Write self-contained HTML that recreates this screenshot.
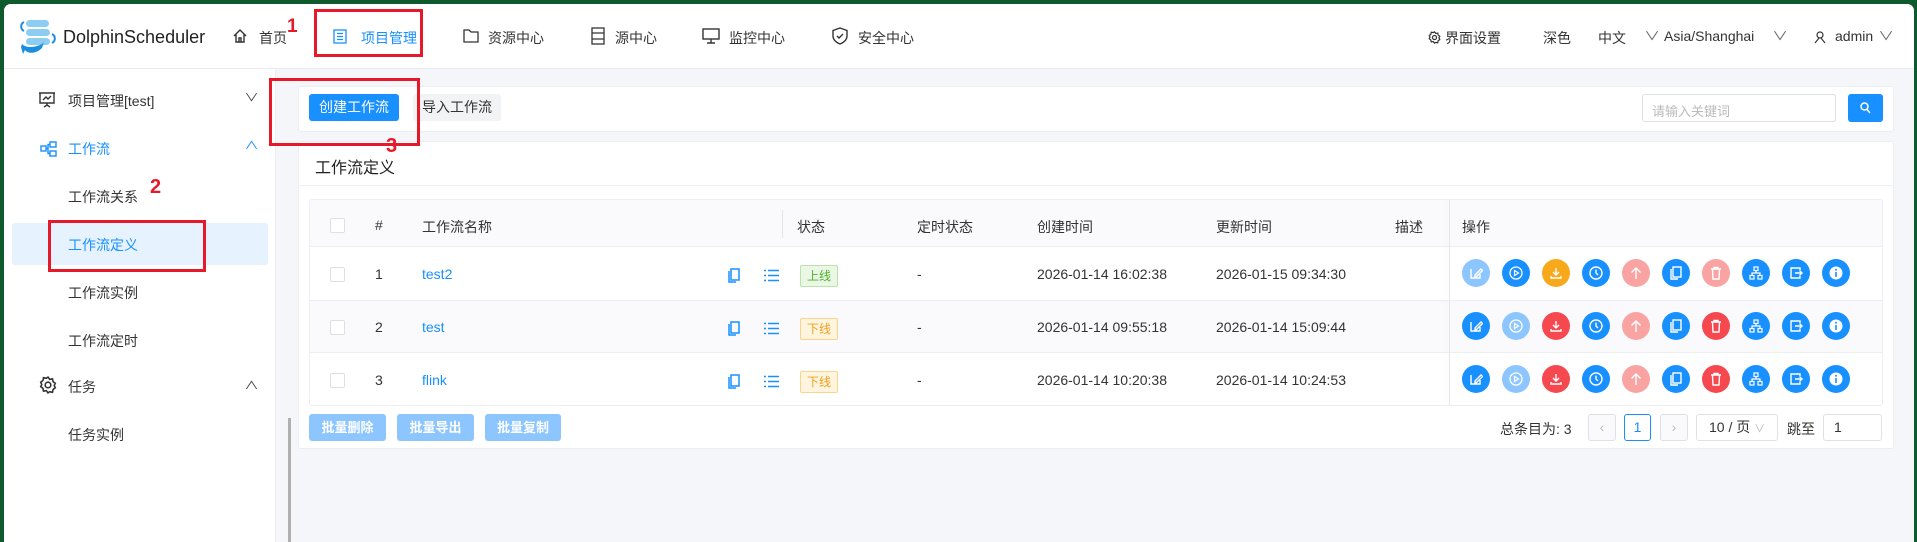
<!DOCTYPE html>
<html><head><meta charset="utf-8">
<style>
*{box-sizing:border-box;margin:0;padding:0}
body{width:1917px;height:542px;overflow:hidden;background:#0f5a2c;font-family:"Liberation Sans","Noto Sans CJK SC",sans-serif;font-size:14px;color:#333}
.frame{position:absolute;left:4px;top:4px;right:3px;bottom:0;background:#f5f6fa;border-radius:7px 7px 0 0;overflow:hidden}
.a{position:absolute;white-space:nowrap}
.hdr{position:absolute;left:0;top:0;right:0;height:65px;background:#fff;border-bottom:1px solid #e8e9ee}
.side{position:absolute;left:0;top:65px;width:272px;bottom:0;background:#fff;border-right:1px solid #eee}
.blue{color:#1890ff}
.red{border:3px solid #e6192a;position:absolute;z-index:5}
.card{position:absolute;background:#fff;border:1px solid #eceef2;border-radius:3px}
.cb{position:absolute;width:15px;height:15px;border:1px solid #dcdfe6;border-radius:2px;background:#fff}
.c{position:absolute;width:28px;height:28px;border-radius:50%}
.c svg{position:absolute;left:7px;top:7px}
.tag{position:absolute;width:38px;height:22px;font-size:12px;text-align:center;line-height:20px;border-radius:2px;white-space:nowrap}
.bb{position:absolute;height:27px;background:#8dc5ff;color:#fff;font-size:13px;text-align:center;line-height:27px;border-radius:3px;font-weight:bold}
.pg{position:absolute;top:410px;height:27px;border:1px solid #e0e0e6;border-radius:3px;background:#fff;text-align:center;line-height:25px}
</style></head><body>
<div class="frame">
<div class="hdr">
 <svg class="a" style="left:12px;top:14px" width="46" height="40" viewBox="0 0 46 40">
  <rect x="10" y="2" width="23" height="7" rx="3.5" fill="#8ecdf2"/><rect x="10" y="11" width="24" height="7" rx="3.5" fill="#8ecdf2"/><rect x="10" y="20" width="24" height="7" rx="3.5" fill="#8ecdf2"/>
  <path d="M8 4 A5 5 0 0 0 8 13" stroke="#1c8ee0" stroke-width="2" fill="none"/><path d="M36 16 A5 5 0 0 1 36 25" stroke="#1c8ee0" stroke-width="2" fill="none"/>
  <path d="M6 26 C10 30 18 30 26 26 L28 24 L26 30 C20 36 12 36 9 32 L7 36 L5 29 Z" fill="#1c8ee0"/>
 </svg>
 <div class="a" style="left:59px;top:23px;font-size:18px;color:#222">DolphinScheduler</div>
 <svg class="a" style="left:228px;top:24px" width="16" height="16" viewBox="0 0 16 16" fill="none" stroke="#333" stroke-width="1.4"><path d="M2 8 L8 2 L14 8 M4 6 V14 H12 V6 M7 14 V10 H9 V14"/></svg>
 <div class="a" style="left:255px;top:24px">首页</div>
 <div class="a" style="left:283px;top:12px;color:#e6192a;font-weight:bold;font-size:19px">1</div>
 <svg class="a" style="left:329px;top:25px" width="14" height="15" viewBox="0 0 14 15" fill="none" stroke="#1890ff" stroke-width="1.3"><rect x="1" y="1" width="12" height="13"/><path d="M4 4.5h6M4 7.5h6M4 10.5h6"/></svg>
 <div class="a blue" style="left:357px;top:24px">项目管理</div>
 <div class="red" style="left:310px;top:5px;width:109px;height:48px"></div>
 <svg class="a" style="left:459px;top:25px" width="16" height="14" viewBox="0 0 16 14" fill="none" stroke="#333" stroke-width="1.3"><path d="M1 1h5l2 2h7v10H1z"/></svg>
 <div class="a" style="left:484px;top:24px">资源中心</div>
 <svg class="a" style="left:587px;top:23px" width="14" height="18" viewBox="0 0 14 18" fill="none" stroke="#333" stroke-width="1.3"><rect x="1" y="1" width="12" height="16"/><path d="M1 6h12M1 12h12"/></svg>
 <div class="a" style="left:611px;top:24px">源中心</div>
 <svg class="a" style="left:698px;top:24px" width="18" height="16" viewBox="0 0 18 16" fill="none" stroke="#333" stroke-width="1.4"><rect x="1" y="1" width="16" height="10"/><path d="M9 11v4M5 15h8"/></svg>
 <div class="a" style="left:725px;top:24px">监控中心</div>
 <svg class="a" style="left:828px;top:23px" width="16" height="18" viewBox="0 0 16 18" fill="none" stroke="#333" stroke-width="1.4"><path d="M8 1 L15 3.5 V9 C15 13 11 16 8 17 C5 16 1 13 1 9 V3.5 Z M5 9l2 2 4-4"/></svg>
 <div class="a" style="left:854px;top:24px">安全中心</div>
 <svg class="a" style="left:1424px;top:27px" width="13" height="13" viewBox="0 0 16 16" fill="none" stroke="#333" stroke-width="1.5"><circle cx="8" cy="8" r="2.5"/><path d="M8 1l1.5 2 2.5-.5.5 2.5 2 1.5-1 2 1 2-2 1.5-.5 2.5-2.5-.5L8 15l-1.5-2-2.5.5-.5-2.5-2-1.5 1-2-1-2 2-1.5.5-2.5 2.5.5z"/></svg>
 <div class="a" style="left:1441px;top:24px">界面设置</div>
 <div class="a" style="left:1539px;top:24px">深色</div>
 <div class="a" style="left:1594px;top:24px">中文</div>
 <div class="a" style="left:1642px;top:23px;color:#666;font-size:12px;transform:scaleX(1.3)">∨</div>
 <div class="a" style="left:1660px;top:24px">Asia/Shanghai</div>
 <div class="a" style="left:1770px;top:23px;color:#666;font-size:12px;transform:scaleX(1.3)">∨</div>
 <svg class="a" style="left:1810px;top:27px" width="12" height="13" viewBox="0 0 12 13" fill="none" stroke="#333" stroke-width="1.2"><circle cx="6" cy="4" r="3"/><path d="M1 12 L5 7 M11 12 L7 7"/></svg>
 <div class="a" style="left:1831px;top:24px">admin</div>
 <div class="a" style="left:1876px;top:23px;color:#666;font-size:12px;transform:scaleX(1.3)">∨</div>
</div>

<div class="side">
 <svg class="a" style="left:34px;top:22px" width="18" height="18" viewBox="0 0 18 18" fill="none" stroke="#333" stroke-width="1.4"><path d="M1 2h16M2 2v10h14V2M5 9l3-3 2 2 3-3M9 12v3M6 16l3-2 3 2"/></svg>
 <div class="a" style="left:64px;top:22px">项目管理[test]</div>
 <div class="a" style="left:242px;top:20px;color:#444;font-size:11px;transform:scaleX(1.3)">∨</div>
 <svg class="a" style="left:36px;top:72px" width="17" height="16" viewBox="0 0 17 16" fill="none" stroke="#1890ff" stroke-width="1.4"><rect x="1" y="5" width="5" height="5"/><rect x="10" y="1" width="6" height="5"/><rect x="10" y="10" width="6" height="5"/><path d="M6 7.5h2V3.5h2M8 7.5v5h2"/></svg>
 <div class="a blue" style="left:64px;top:70px">工作流</div>
 <div class="a blue" style="left:242px;top:68px;font-size:11px;transform:scaleX(1.3) scaleY(-1)">∨</div>
 <div class="a" style="left:64px;top:118px">工作流关系</div>
 <div class="a" style="left:146px;top:107px;color:#e6192a;font-weight:bold;font-size:20px">2</div>
 <div class="a" style="left:8px;top:154px;width:256px;height:42px;background:#e6f3ff;border-radius:3px"></div>
 <div class="a blue" style="left:64px;top:166px">工作流定义</div>
 <div class="red" style="left:44px;top:151px;width:158px;height:52px"></div>
 <div class="a" style="left:64px;top:214px">工作流实例</div>
 <div class="a" style="left:64px;top:262px">工作流定时</div>
 <svg class="a" style="left:35px;top:307px" width="18" height="18" viewBox="0 0 16 16" fill="none" stroke="#333" stroke-width="1.4"><circle cx="8" cy="8" r="2.5"/><path d="M8 1l1.5 2 2.5-.5.5 2.5 2 1.5-1 2 1 2-2 1.5-.5 2.5-2.5-.5L8 15l-1.5-2-2.5.5-.5-2.5-2-1.5 1-2-1-2 2-1.5.5-2.5 2.5.5z"/></svg>
 <div class="a" style="left:64px;top:308px">任务</div>
 <div class="a" style="left:242px;top:308px;color:#444;font-size:11px;transform:scaleX(1.3) scaleY(-1)">∨</div>
 <div class="a" style="left:64px;top:356px">任务实例</div>
</div>
<div class="a" style="left:284px;top:414px;width:3px;height:130px;background:#b0b0b0"></div>

<div class="card" style="left:294px;top:82px;width:1596px;height:46px"></div>
<div class="a" style="left:305px;top:90px;width:90px;height:27px;background:#1890ff;border-radius:3px;color:#fff;text-align:center;line-height:27px;font-size:14px">创建工作流</div>
<div class="a" style="left:409px;top:90px;width:88px;height:27px;background:#f2f3f5;border-radius:3px;text-align:center;line-height:27px">导入工作流</div>
<div class="a" style="left:1638px;top:90px;width:194px;height:28px;border:1px solid #dcdfe6;border-radius:3px;background:#fff;color:#bbb;font-size:13px;padding:6px 9px">请输入关键词</div>
<div class="a" style="left:1844px;top:90px;width:35px;height:28px;background:#1890ff;border-radius:3px"><svg style="position:absolute;left:12px;top:8px" width="11" height="12" viewBox="0 0 11 12" fill="none" stroke="#fff" stroke-width="1.5"><circle cx="4.5" cy="4.5" r="3.5"/><path d="M7 7.5l3 3.5"/></svg></div>

<div class="card" style="left:294px;top:137px;width:1596px;height:308px"></div>
<div class="a" style="left:311px;top:150px;font-size:16px;color:#222">工作流定义</div>
<div class="a" style="left:295px;top:181px;width:1594px;height:1px;background:#eceef2"></div>
<div class="red" style="left:265px;top:74px;width:151px;height:68px"></div>
<div class="a" style="left:382px;top:131px;color:#e6192a;font-weight:bold;font-size:20px;z-index:6">3</div>

<div class="a" style="left:305px;top:195px;width:1574px;height:207px;border:1px solid #eceef2;border-radius:3px;background:#fff;overflow:hidden">
 <div class="a" style="left:0;top:0;width:100%;height:47px;background:#fafafc;border-bottom:1px solid #eceef2"></div>
 <div class="a" style="left:0;top:100px;width:100%;height:53px;background:#fafafc;border-top:1px solid #eceef2;border-bottom:1px solid #eceef2"></div>
 <div class="a" style="left:472px;top:10px;width:1px;height:28px;background:#e6e6ea"></div>
 <div class="a" style="left:1139px;top:0;width:1px;height:207px;background:#e6e6ea;box-shadow:-3px 0 6px rgba(0,0,0,.06)"></div>
</div>
<div class="cb" style="left:326px;top:214px"></div>
<div class="a" style="left:371px;top:213px">#</div>
<div class="a" style="left:418px;top:213px">工作流名称</div>
<div class="a" style="left:793px;top:213px">状态</div>
<div class="a" style="left:913px;top:213px">定时状态</div>
<div class="a" style="left:1033px;top:213px">创建时间</div>
<div class="a" style="left:1212px;top:213px">更新时间</div>
<div class="a" style="left:1391px;top:213px">描述</div>
<div class="a" style="left:1458px;top:213px">操作</div>

<div class="cb" style="left:326px;top:263px"></div><div class="a" style="left:371px;top:262px">1</div><div class="a blue" style="left:418px;top:262px">test2</div>
<div class="cb" style="left:326px;top:316px"></div><div class="a" style="left:371px;top:315px">2</div><div class="a blue" style="left:418px;top:315px">test</div>
<div class="cb" style="left:326px;top:369px"></div><div class="a" style="left:371px;top:368px">3</div><div class="a blue" style="left:418px;top:368px">flink</div>

<svg class="a" style="left:724px;top:264px" width="12" height="15" viewBox="0 0 12 15" fill="none" stroke="#1890ff" stroke-width="1.5"><rect x="3" y="1" width="8" height="11"/><path d="M1 3v11h7"/></svg>
<svg class="a" style="left:724px;top:317px" width="12" height="15" viewBox="0 0 12 15" fill="none" stroke="#1890ff" stroke-width="1.5"><rect x="3" y="1" width="8" height="11"/><path d="M1 3v11h7"/></svg>
<svg class="a" style="left:724px;top:370px" width="12" height="15" viewBox="0 0 12 15" fill="none" stroke="#1890ff" stroke-width="1.5"><rect x="3" y="1" width="8" height="11"/><path d="M1 3v11h7"/></svg>
<svg class="a" style="left:760px;top:265px" width="15" height="13" viewBox="0 0 15 13" stroke="#1890ff" stroke-width="1.5"><path d="M0 1.5h2M4 1.5h11M0 6.5h2M4 6.5h11M0 11.5h2M4 11.5h11"/></svg>
<svg class="a" style="left:760px;top:318px" width="15" height="13" viewBox="0 0 15 13" stroke="#1890ff" stroke-width="1.5"><path d="M0 1.5h2M4 1.5h11M0 6.5h2M4 6.5h11M0 11.5h2M4 11.5h11"/></svg>
<svg class="a" style="left:760px;top:371px" width="15" height="13" viewBox="0 0 15 13" stroke="#1890ff" stroke-width="1.5"><path d="M0 1.5h2M4 1.5h11M0 6.5h2M4 6.5h11M0 11.5h2M4 11.5h11"/></svg>

<div class="tag" style="left:796px;top:261px;background:#e9f7e4;border:1px solid #b9e3a8;color:#52b030">上线</div>
<div class="tag" style="left:796px;top:314px;background:#fff4de;border:1px solid #fbd38c;color:#f0a020">下线</div>
<div class="tag" style="left:796px;top:367px;background:#fff4de;border:1px solid #fbd38c;color:#f0a020">下线</div>
<div class="a" style="left:913px;top:262px">-</div><div class="a" style="left:913px;top:315px">-</div><div class="a" style="left:913px;top:368px">-</div>
<div class="a" style="left:1033px;top:262px">2026-01-14 16:02:38</div><div class="a" style="left:1212px;top:262px">2026-01-15 09:34:30</div>
<div class="a" style="left:1033px;top:315px">2026-01-14 09:55:18</div><div class="a" style="left:1212px;top:315px">2026-01-14 15:09:44</div>
<div class="a" style="left:1033px;top:368px">2026-01-14 10:20:38</div><div class="a" style="left:1212px;top:368px">2026-01-14 10:24:53</div>

<div class="bb" style="left:305px;top:410px;width:77px">批量删除</div>
<div class="bb" style="left:393px;top:410px;width:77px">批量导出</div>
<div class="bb" style="left:481px;top:410px;width:76px">批量复制</div>

<div class="a" style="left:1496px;top:415px">总条目为: 3</div>
<div class="pg" style="left:1584px;width:28px;background:#fafafc;color:#bbb">‹</div>
<div class="pg" style="left:1620px;width:27px;border-color:#1890ff;color:#1890ff">1</div>
<div class="pg" style="left:1656px;width:28px;background:#fafafc;color:#bbb">›</div>
<div class="pg" style="left:1692px;width:82px;text-align:left;padding-left:12px">10 / 页 <span style="color:#bbb;font-size:11px">∨</span></div>
<div class="a" style="left:1783px;top:415px">跳至</div>
<div class="pg" style="left:1819px;width:59px;text-align:left;padding-left:10px">1</div>

<div id="ops"></div>
</div>
<script>
var col={B:'#1890ff',L:'#8dc6ff',O:'#f7a81b',R:'#f5484f',P:'#f9a3a3'};
var rows=['LBOBPBPBBB','BLRBPBRBBB','BLRBPBRBBB'];
var ic=[
'<path d="M2 3v9h9V8M6 9l6-6 1.5 1.5-6 6H6z" fill="none" stroke="#fff" stroke-width="1.4"/>',
'<circle cx="7" cy="7" r="6" fill="none" stroke="#fff" stroke-width="1.3"/><path d="M5.5 4.5v5l4-2.5z" fill="none" stroke="#fff" stroke-width="1.2"/>',
'<path d="M7 2v7M4 6l3 3 3-3M2 10v2h10v-2" fill="none" stroke="#fff" stroke-width="1.4"/>',
'<circle cx="7" cy="7" r="6" fill="none" stroke="#fff" stroke-width="1.4"/><path d="M7 3.5V7l2 2" fill="none" stroke="#fff" stroke-width="1.4"/>',
'<path d="M7 13V2M2.5 6.5L7 2l4.5 4.5" fill="none" stroke="#fff" stroke-width="1.4"/>',
'<rect x="4" y="1" width="8" height="10" fill="none" stroke="#fff" stroke-width="1.4"/><path d="M2 3v10h7" fill="none" stroke="#fff" stroke-width="1.4"/>',
'<path d="M2 3h10M5 3V1.5h4V3M3.5 3l.5 10h6l.5-10" fill="none" stroke="#fff" stroke-width="1.4"/>',
'<rect x="5" y="1" width="4" height="3.5" fill="none" stroke="#fff" stroke-width="1.2"/><rect x="1" y="9.5" width="4" height="3.5" fill="none" stroke="#fff" stroke-width="1.2"/><rect x="9" y="9.5" width="4" height="3.5" fill="none" stroke="#fff" stroke-width="1.2"/><path d="M7 4.5v2.5M3 9.5V7h8v2.5" fill="none" stroke="#fff" stroke-width="1.2"/>',
'<path d="M11 4V2H2v10h9v-2M6 7h7M10.5 4.5L13 7l-2.5 2.5" fill="none" stroke="#fff" stroke-width="1.4"/>',
'<circle cx="7" cy="7" r="6.5" fill="#fff"/><rect x="6.2" y="6" width="1.6" height="5" fill="#1890ff"/><circle cx="7" cy="3.8" r="1" fill="#1890ff"/>'];
var h='',ys=[273,326,379];
for(var r=0;r<3;r++)for(var i=0;i<10;i++){h+='<div class="c" style="left:'+(1458+40*i)+'px;top:'+(ys[r]-18)+'px;background:'+col[rows[r][i]]+'"><svg width="14" height="14" viewBox="0 0 14 14">'+ic[i]+'</svg></div>';}
document.getElementById('ops').outerHTML=h;
</script>
</body></html>
